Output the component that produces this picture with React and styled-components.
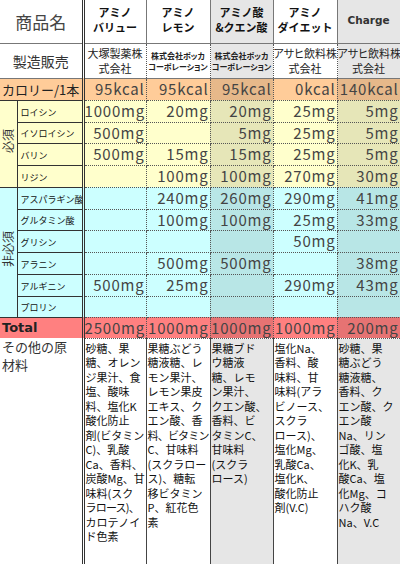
import React from 'react'
import styled, { createGlobalStyle, css } from 'styled-components'

const GlobalStyle = createGlobalStyle`
  html, body {
    margin: 0;
    padding: 0;
    background: #fff;
  }
  body {
    width: 400px;
    height: 564px;
    overflow: hidden;
    font-family: 'Noto Sans CJK JP', sans-serif;
  }
`

// Excel風の網掛け(グレーのドット)
const shade = css`
  background-image: repeating-conic-gradient(rgba(0, 0, 0, 0.2) 0 25%, transparent 0 50%);
  background-size: 2px 2px;
`

const Sheet = styled.table`
  width: 400px;
  table-layout: fixed;
  border-collapse: collapse;
  font-family: 'Noto Sans CJK JP', sans-serif;
  color: #222;
`

const Col = styled.col`
  width: ${p => p.$w}px;
`

const Row = styled.tr`
  height: ${p => p.$h}px;
  background: ${p => p.$bg || '#fff'};
`

const NameHead = styled.th`
  font-size: 17px;
  font-weight: 400;
  color: #444;
  text-align: center;
  padding: 0;
  border-right: 3px double #333;
  border-bottom: 1px solid #777;
`

const HeadCell = styled.th`
  font-size: 11px;
  font-weight: 700;
  line-height: 15px;
  text-align: center;
  padding: 0 0 3px;
  color: #111;
  border: 1px solid #777;
  border-top: none;
  ${p => p.$shade && shade}
`

const BrandText = styled.span`
  font-family: 'DejaVu Sans', sans-serif;
  font-size: 10.5px;
  font-weight: 700;
  color: #333;
`

const MakerLabel = styled.td`
  font-size: 14px;
  color: #333;
  text-align: center;
  padding: 0;
  border-right: 3px double #333;
  border-bottom: 1px solid #777;
`

const MakerCell = styled.td`
  font-size: ${p => (p.$small ? 8 : 11)}px;
  font-weight: ${p => (p.$small ? 700 : 400)};
  line-height: ${p => (p.$small ? 11 : 15)}px;
  font-feature-settings: "palt";
  white-space: nowrap;
  overflow: hidden;
  text-align: center;
  padding: 0;
  color: #222;
  border-left: 1px dotted #555;
  border-right: 1px dotted #555;
  border-bottom: 1px solid #777;
  ${p => p.$shade && shade}
`

const RowLabel = styled.td`
  font-size: 13px;
  color: #222;
  text-align: left;
  padding: 0 0 0 2px;
  white-space: nowrap;
  border-right: 3px double #333;
  border-bottom: 1px solid #333;
`

const TotalLabel = styled(RowLabel)`
  font-family: 'DejaVu Sans', sans-serif;
  font-weight: 700;
  font-size: 13px;
  border-top: 1px solid #333;
  border-bottom: none;
`

const GroupCell = styled.td`
  padding: 0;
  text-align: center;
  vertical-align: middle;
  border-right: 1px solid #333;
  border-bottom: 1px solid #333;
`

const GroupText = styled.span`
  display: inline-block;
  writing-mode: vertical-rl;
  text-orientation: sideways;
  transform: rotate(180deg);
  font-size: 12px;
  line-height: 14px;
  color: #333;
`

const AminoName = styled.td`
  font-size: 9px;
  line-height: 12px;
  padding: 3px 0 0 3px;
  color: #111;
  white-space: nowrap;
  overflow: hidden;
  border-right: 3px double #333;
  border-bottom: 1px solid #333;
`

const Num = styled.td`
  font-family: 'Noto Sans CJK JP', sans-serif;
  font-size: 15px;
  line-height: 16px;
  letter-spacing: 0.8px;
  color: #444;
  text-align: right;
  padding: 0 1px 0 0;
  white-space: nowrap;
  border-left: 1px dotted #555;
  border-right: 1px dotted #555;
  border-bottom: 1px dotted #555;
  ${p => p.$shade && shade}
`

const NoteLabel = styled.td`
  font-size: 13px;
  line-height: 18px;
  color: #333;
  vertical-align: top;
  padding: 0 0 0 2px;
  border-right: 3px double #333;
`

const NoteCell = styled.td`
  font-size: 11px;
  line-height: 14.5px;
  color: #111;
  vertical-align: top;
  padding: 2px 0 0 1px;
  white-space: nowrap;
  overflow: hidden;
  border-left: 1px solid #444;
  border-right: 1px solid #444;
  border-top: 1px dotted #555;
  ${p => p.$shade && shade}
`

const NoteLine = styled.div`
  letter-spacing: ${p => (p.$tight ? '-0.8px' : '0')};
`

const products = [
  {
    key: 'value',
    name: ['アミノ', 'バリュー'],
    maker: ['大塚製薬株', '式会社'],
    kcal: '95kcal',
    total: '2500mg',
    notes: ['砂糖、果', '糖、オレン', 'ジ果汁、食', '塩、酸味', '料、塩化K', '酸化防止', '剤(ビタミン', 'C)、乳酸', 'Ca、香料、', '炭酸Mg、甘', '味料(スク', 'ラロース)、', 'カロテノイ', 'ド色素'],
  },
  {
    key: 'lemon',
    name: ['アミノ', 'レモン'],
    maker: ['株式会社ポッカ', 'コーポレーション'],
    small: true,
    kcal: '95kcal',
    total: '1000mg',
    notes: ['果糖ぶどう', '糖液糖、レ', 'モン果汁、', 'レモン果皮', 'エキス、ク', 'エン酸、香', '料、ビタミン', 'C、甘味料', '(スクラロー', 'ス)、糖転', '移ビタミン', 'P、紅花色', '素'],
  },
  {
    key: 'citric',
    name: ['アミノ酸', '&クエン酸'],
    maker: ['株式会社ポッカ', 'コーポレーション'],
    small: true,
    shade: true,
    kcal: '95kcal',
    total: '1000mg',
    notes: ['果糖ブド', 'ウ糖液', '糖、レモ', 'ン果汁、', 'クエン酸、', '香料、ビ', 'タミンC、', '甘味料', '(スクラ', 'ロース)'],
  },
  {
    key: 'diet',
    name: ['アミノ', 'ダイエット'],
    maker: ['アサヒ飲料株', '式会社'],
    kcal: '0kcal',
    total: '1000mg',
    notes: ['塩化Na、', '香料、酸', '味料、甘', '味料(アラ', 'ビノース、', 'スクラ', 'ロース)、', '塩化Mg、', '乳酸Ca、', '塩化K、', '酸化防止', '剤(V.C)'],
  },
  {
    key: 'charge',
    brand: 'Charge',
    maker: ['アサヒ飲料株', '式会社'],
    shade: true,
    kcal: '140kcal',
    total: '200mg',
    notes: ['砂糖、果', '糖ぶどう', '糖液糖、', '香料、ク', 'エン酸、ク', 'エン酸', 'Na、リン', 'ゴ酸、塩', '化K、乳', '酸Ca、塩', '化Mg、コ', 'ハク酸', 'Na、V.C'],
  },
]

const groups = [
  {
    label: '必須',
    bg: '#ffffcc',
    rows: [
      { name: 'ロイシン', h: 22, v: ['1000mg', '20mg', '20mg', '25mg', '5mg'] },
      { name: 'イソロイシン', h: 21, v: ['500mg', '', '5mg', '25mg', '5mg'] },
      { name: 'バリン', h: 22, v: ['500mg', '15mg', '15mg', '25mg', '5mg'] },
      { name: 'リジン', h: 22, v: ['', '100mg', '100mg', '270mg', '30mg'] },
    ],
  },
  {
    label: '非必須',
    bg: '#ccffff',
    rows: [
      { name: 'アスパラギン酸', h: 22, v: ['', '240mg', '260mg', '290mg', '41mg'] },
      { name: 'グルタミン酸', h: 21, v: ['', '100mg', '100mg', '25mg', '33mg'] },
      { name: 'グリシン', h: 22, v: ['', '', '', '50mg', ''] },
      { name: 'アラニン', h: 22, v: ['', '500mg', '500mg', '', '38mg'] },
      { name: 'アルギニン', h: 22, v: ['500mg', '25mg', '', '290mg', '43mg'] },
      { name: 'プロリン', h: 21, v: ['', '', '', '', ''] },
    ],
  },
]

function App() {
  return (
    <>
      <GlobalStyle />
      <Sheet>
        <colgroup>
          {[17, 66, 63, 64, 63, 64, 63].map((w, i) => (
            <Col key={i} $w={w} />
          ))}
        </colgroup>
        <tbody>
          <Row $h={43}>
            <NameHead colSpan={2}>商品名</NameHead>
            {products.map(p => (
              <HeadCell key={p.key} $shade={p.shade}>
                {p.brand ? (
                  <BrandText>{p.brand}</BrandText>
                ) : (
                  <>
                    {p.name[0]}
                    <br />
                    {p.name[1]}
                  </>
                )}
              </HeadCell>
            ))}
          </Row>

          <Row $h={35}>
            <MakerLabel colSpan={2}>製造販売</MakerLabel>
            {products.map(p => (
              <MakerCell key={p.key} $shade={p.shade} $small={p.small}>
                {p.maker[0]}
                <br />
                {p.maker[1]}
              </MakerCell>
            ))}
          </Row>

          <Row $h={22} $bg="#ffcc99">
            <RowLabel colSpan={2}>カロリー/1本</RowLabel>
            {products.map(p => (
              <Num key={p.key} $shade={p.shade}>{p.kcal}</Num>
            ))}
          </Row>

          {groups.map(g =>
            g.rows.map((r, i) => (
              <Row key={r.name} $h={r.h} $bg={g.bg}>
                {i === 0 && (
                  <GroupCell rowSpan={g.rows.length}>
                    <GroupText>{g.label}</GroupText>
                  </GroupCell>
                )}
                <AminoName>{r.name}</AminoName>
                {r.v.map((val, j) => (
                  <Num key={j} $shade={products[j].shade}>{val}</Num>
                ))}
              </Row>
            ))
          )}

          <Row $h={21} $bg="#ff8080">
            <TotalLabel colSpan={2}>Total</TotalLabel>
            {products.map(p => (
              <Num key={p.key} $shade={p.shade}>{p.total}</Num>
            ))}
          </Row>

          <Row $h={226}>
            <NoteLabel colSpan={2}>
              その他の原
              <br />
              材料
            </NoteLabel>
            {products.map(p => (
              <NoteCell key={p.key} $shade={p.shade}>
                {p.notes.map((line, k) => (
                  <NoteLine key={k} $tight={[...line].length >= 6 && !/[A-Za-z(]/.test(line)}>
                    {line}
                  </NoteLine>
                ))}
              </NoteCell>
            ))}
          </Row>
        </tbody>
      </Sheet>
    </>
  )
}

export default App
